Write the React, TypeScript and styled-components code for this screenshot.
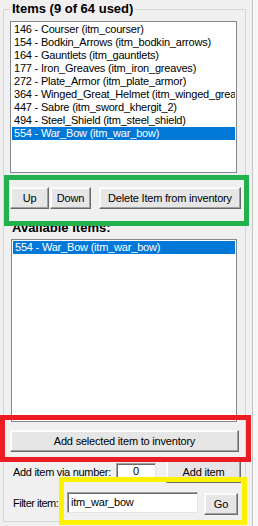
import React from "react";
import styled, { createGlobalStyle } from "styled-components";

const Global = createGlobalStyle`
  html, body { margin: 0; padding: 0; background: #f0f0f0; }
  * { box-sizing: border-box; }
`;

const Root = styled.div`
  position: relative;
  width: 258px;
  height: 526px;
  overflow: hidden;
  background: #f7f7f7;
  font-family: "Liberation Sans", Arial, sans-serif;
  font-size: 11px;
  letter-spacing: -0.2px;
  color: #000;
`;

const Panel = styled.div`
  width: 253px;
  height: 526px;
  background: #f0f0f0;
  border-right: 1px solid #c4c4c4;
  padding: 9px 0 0 3px;
`;

const GroupBox = styled.div`
  width: 243px;
  height: 513px;
  border: 1px solid #d5d5d5;
  display: flex;
  flex-direction: column;
  align-items: flex-start;
`;

const Title = styled.div`
  margin: -8px 0 0 6px;
  padding: 0 2px;
  height: 14px;
  line-height: 14px;
  font-size: 13px;
  font-weight: bold;
  letter-spacing: 0;
  background: #f0f0f0;
`;

const ListBox = styled.div<{ $w: number; $h: number; $mt: number; $ml: number }>`
  width: ${(p) => p.$w}px;
  height: ${(p) => p.$h}px;
  margin: ${(p) => p.$mt}px 0 0 ${(p) => p.$ml}px;
  background: #fff;
  border: 1px solid #828790;
  padding: 1px 1px;
  overflow: hidden;
`;

const ListItem = styled.div<{ $selected?: boolean }>`
  height: 13px;
  line-height: 13px;
  padding-left: 2px;
  white-space: nowrap;
  overflow: hidden;
  background: ${(p) => (p.$selected ? "#0078d7" : "transparent")};
  color: ${(p) => (p.$selected ? "#fff" : "#000")};
`;

const ButtonRow = styled.div`
  display: flex;
  margin: 14px 0 0 6px;
`;

const Button = styled.button<{ $w: number; $h?: number; $ml?: number; $mt?: number }>`
  width: ${(p) => p.$w}px;
  height: ${(p) => p.$h ?? 22}px;
  margin: ${(p) => p.$mt ?? 0}px 0 0 ${(p) => p.$ml ?? 0}px;
  padding: 0;
  font: inherit;
  letter-spacing: inherit;
  color: #000;
  background: #e6e6e6;
  border: 1px solid;
  border-color: #f8f8f8 #6a6a6a #6a6a6a #f8f8f8;
  box-shadow: inset -1px -1px 0 #a0a0a0, inset 1px 1px 0 #ffffff;
  text-align: center;
  flex-shrink: 0;
`;

const SectionLabel = styled.div`
  margin: 12px 0 0 8px;
  height: 14px;
  line-height: 14px;
  font-size: 13px;
  font-weight: bold;
  letter-spacing: 0;
`;

const FormRow = styled.div<{ $mt: number }>`
  display: flex;
  align-items: center;
  margin: ${(p) => p.$mt}px 0 0 9px;
`;

const FieldLabel = styled.span<{ $w: number; $tight?: boolean }>`
  width: ${(p) => p.$w}px;
  white-space: nowrap;
  letter-spacing: ${(p) => (p.$tight ? "-0.5px" : "-0.3px")};
  flex-shrink: 0;
`;

const TextBox = styled.div<{ $w: number; $h: number; $center?: boolean }>`
  width: ${(p) => p.$w}px;
  height: ${(p) => p.$h}px;
  background: #fff;
  border: 1px solid;
  border-color: #a0a0a0 #e3e3e3 #e3e3e3 #a0a0a0;
  box-shadow: inset 1px 1px 0 #696969;
  line-height: ${(p) => p.$h - 3}px;
  padding: 0 3px;
  text-align: ${(p) => (p.$center ? "center" : "left")};
  flex-shrink: 0;
`;

const Highlight = styled.div<{ $c: string; $x: number; $y: number; $w: number; $h: number }>`
  position: absolute;
  left: ${(p) => p.$x}px;
  top: ${(p) => p.$y}px;
  width: ${(p) => p.$w}px;
  height: ${(p) => p.$h}px;
  border: 5px solid ${(p) => p.$c};
  pointer-events: none;
`;

const items = [
  "146 - Courser (itm_courser)",
  "154 - Bodkin_Arrows (itm_bodkin_arrows)",
  "164 - Gauntlets (itm_gauntlets)",
  "177 - Iron_Greaves (itm_iron_greaves)",
  "272 - Plate_Armor (itm_plate_armor)",
  "364 - Winged_Great_Helmet (itm_winged_great_helmet)",
  "447 - Sabre (itm_sword_khergit_2)",
  "494 - Steel_Shield (itm_steel_shield)",
  "554 - War_Bow (itm_war_bow)",
];

export default function App() {
  return (
    <Root>
      <Global />
      <Panel>
        <GroupBox>
          <Title>Items (9 of 64 used)</Title>
          <ListBox $w={227} $h={152} $mt={5} $ml={6}>
            {items.map((t, i) => (
              <ListItem key={t} $selected={i === items.length - 1}>
                {t}
              </ListItem>
            ))}
          </ListBox>
          <ButtonRow>
            <Button $w={39}>Up</Button>
            <Button $w={41} $ml={1}>Down</Button>
            <Button $w={142} $ml={8}>Delete Item from inventory</Button>
          </ButtonRow>
          <SectionLabel>Available Items:</SectionLabel>
          <ListBox $w={226} $h={183} $mt={4} $ml={7}>
            <ListItem $selected>554 - War_Bow (itm_war_bow)</ListItem>
          </ListBox>
          <Button $w={229} $mt={8} $ml={6}>Add selected item to inventory</Button>
          <FormRow $mt={8}>
            <FieldLabel $w={103}>Add item via number:</FieldLabel>
            <TextBox $w={40} $h={18} $center>0</TextBox>
            <Button $w={75} $h={23} $ml={10}>Add item</Button>
          </FormRow>
          <FormRow $mt={7}>
            <FieldLabel $w={54} $tight>Filter item:</FieldLabel>
            <TextBox $w={131} $h={21}>itm_war_bow</TextBox>
            <Button $w={34} $h={22} $ml={6} $mt={3}>Go</Button>
          </FormRow>
        </GroupBox>
      </Panel>
      <Highlight $c="#22b14c" $x={4} $y={175} $w={245} $h={51} />
      <Highlight $c="#ed1c24" $x={0} $y={415} $w={251} $h={47} />
      <Highlight $c="#fff200" $x={59} $y={477} $w={188} $h={48} />
    </Root>
  );
}
